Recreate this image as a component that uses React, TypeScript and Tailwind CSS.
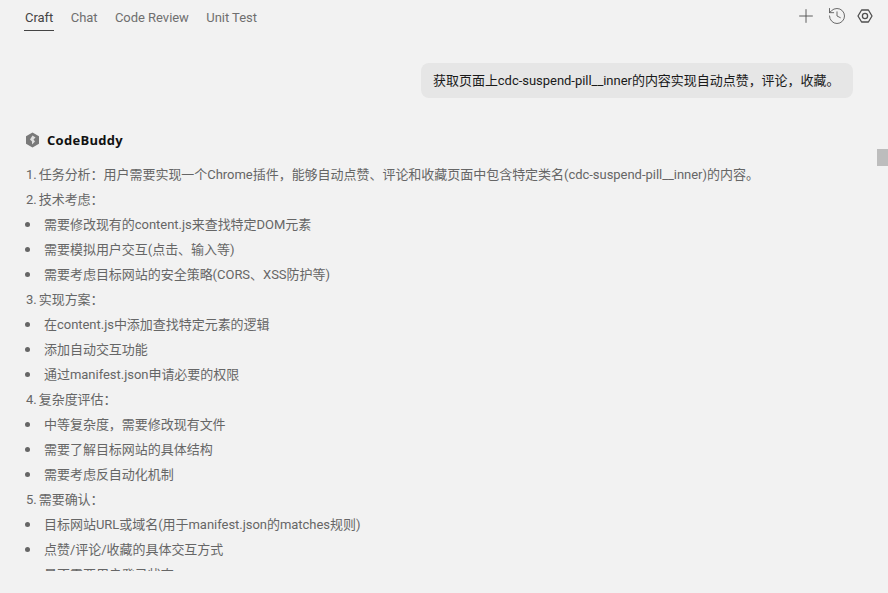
import { History, Plus } from 'lucide-react'

const lines: { num?: string; text: string; bullet?: boolean }[] = [
  { num: '1.', text: '任务分析：用户需要实现一个Chrome插件，能够自动点赞、评论和收藏页面中包含特定类名(cdc-suspend-pill__inner)的内容。' },
  { num: '2.', text: '技术考虑：' },
  { text: '需要修改现有的content.js来查找特定DOM元素', bullet: true },
  { text: '需要模拟用户交互(点击、输入等)', bullet: true },
  { text: '需要考虑目标网站的安全策略(CORS、XSS防护等)', bullet: true },
  { num: '3.', text: '实现方案：' },
  { text: '在content.js中添加查找特定元素的逻辑', bullet: true },
  { text: '添加自动交互功能', bullet: true },
  { text: '通过manifest.json申请必要的权限', bullet: true },
  { num: '4.', text: '复杂度评估：' },
  { text: '中等复杂度，需要修改现有文件', bullet: true },
  { text: '需要了解目标网站的具体结构', bullet: true },
  { text: '需要考虑反自动化机制', bullet: true },
  { num: '5.', text: '需要确认：' },
  { text: '目标网站URL或域名(用于manifest.json的matches规则)', bullet: true },
  { text: '点赞/评论/收藏的具体交互方式', bullet: true },
  { text: '是否需要用户登录状态', bullet: true },
]

const tabs = ['Craft', 'Chat', 'Code Review', 'Unit Test']

function BuddyLogo() {
  return (
    <svg width="15" height="16" viewBox="0 0 15 16">
      <path d="M7.5 0.5 L14 4.2 V11.8 L7.5 15.5 L1 11.8 V4.2 Z" fill="#7a7a7a" />
      <path d="M7.5 3.5 L10.5 5.5 L8.5 7.5 L10 9.5 L7 12.5 L7 9.5 L5 7.5 Z" fill="#e0e0e0" />
    </svg>
  )
}

function SettingsHex() {
  return (
    <svg width="16" height="16" viewBox="0 0 16 16" fill="none" stroke="#4f4f4f" strokeWidth="1.3">
      <path d="M4.6 2 H11.4 L15 8 L11.4 14 H4.6 L1 8 Z" strokeLinejoin="round" />
      <circle cx="8" cy="8" r="2.6" />
    </svg>
  )
}

export default function App() {
  return (
    <div className="relative h-[593px] w-[888px] overflow-hidden bg-[#f2f2f2] font-['Roboto','Noto_Sans_CJK_SC',sans-serif] text-[13px] tracking-[-0.03px]">
      <div className="flex h-[31px] items-start justify-between pl-[25px] pr-[15px] pt-[9px]">
        <div className="flex gap-[17.4px]">
          {tabs.map((tab, i) => (
            <div
              key={tab}
              className={
                i === 0
                  ? '-mx-[1px] h-[22px] border-b border-[#444444] px-[1px] leading-[18px] text-[#444444]'
                  : 'h-[22px] leading-[18px] text-[#6f6f6f]'
              }
            >
              {tab}
            </div>
          ))}
        </div>
        <div className="-mt-[1px] flex h-[16px] items-center gap-[10px] text-[#4f4f4f]">
          <Plus size={22} strokeWidth={1} className="-mt-[1px]" />
          <History size={20} strokeWidth={1} />
          <SettingsHex />
        </div>
      </div>

      <div className="flex justify-end pr-[35px] pt-[32px]">
        <div className="flex h-[35px] w-[432px] items-center whitespace-nowrap rounded-[8px] bg-[#e6e6e6] px-[12px] text-[#1a1a1a]">
          获取页面上cdc-suspend-pill__inner的内容实现自动点赞，评论，收藏。
        </div>
      </div>

      <div className="flex items-center gap-[7px] pl-[25px] pt-[33px]">
        <BuddyLogo />
        <span className="font-['Open_Sans',sans-serif] text-[13px] font-bold leading-[18px] tracking-[0.3px] text-[#111111]">
          CodeBuddy
        </span>
      </div>

      <div className="mt-[13px] h-[409px] overflow-hidden pl-[26px]">
        {lines.map((line) => (
          <div key={line.text} className="flex h-[25px] items-center whitespace-nowrap text-[#666666]">
            {line.bullet && <span className="-ml-[1px] mr-[14px] h-[5px] w-[5px] rounded-full bg-[#666666]" />}
            {line.num && <span className="mr-[2px]">{line.num}</span>}
            {line.text}
          </div>
        ))}
      </div>

      <div className="absolute left-[877px] top-[149px] h-[17px] w-[11px] bg-[#bdbdbd]" />
    </div>
  )
}
